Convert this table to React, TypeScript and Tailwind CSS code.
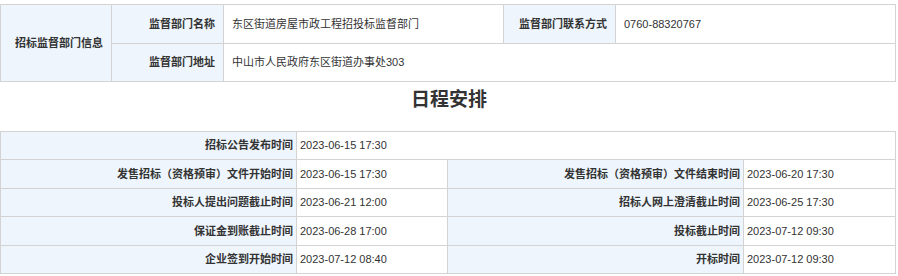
const schedule: [string, string, string?, string?][] = [
  ["招标公告发布时间", "2023-06-15 17:30"],
  ["发售招标（资格预审）文件开始时间", "2023-06-15 17:30", "发售招标（资格预审）文件结束时间", "2023-06-20 17:30"],
  ["投标人提出问题截止时间", "2023-06-21 12:00", "招标人网上澄清截止时间", "2023-06-25 17:30"],
  ["保证金到账截止时间", "2023-06-28 17:00", "投标截止时间", "2023-07-12 09:30"],
  ["企业签到开始时间", "2023-07-12 08:40", "开标时间", "2023-07-12 09:30"],
];

const label = "border border-[#d3d3d3] bg-[#eef5fd] text-right font-bold";
const value = "border border-[#d3d3d3] bg-white text-left";

export default function App() {
  return (
    <div className="w-[898px] bg-white pt-[4px] text-[11px] text-[#333] [font-family:'Liberation_Sans','Noto_Sans_CJK_SC',sans-serif]">
      {/* 监督部门信息 */}
      <table className="w-[896px] table-fixed border-collapse">
        <colgroup>
          <col className="w-[111px]" />
          <col className="w-[112px]" />
          <col className="w-[280px]" />
          <col className="w-[112px]" />
          <col />
        </colgroup>
        <tbody>
          <tr className="h-[39px]">
            <td rowSpan={2} className={`${label} pr-2`}>招标监督部门信息</td>
            <td className={`${label} pr-2`}>监督部门名称</td>
            <td className={`${value} pl-2`}>东区街道房屋市政工程招投标监督部门</td>
            <td className={`${label} pr-2`}>监督部门联系方式</td>
            <td className={`${value} pl-2`}>0760-88320767</td>
          </tr>
          <tr className="h-[38px]">
            <td className={`${label} pr-2`}>监督部门地址</td>
            <td colSpan={3} className={`${value} pl-2`}>中山市人民政府东区街道办事处303</td>
          </tr>
        </tbody>
      </table>

      <div className="flex h-[35px] items-center justify-center text-[19px] font-bold leading-none">日程安排</div>

      {/* 日程安排 */}
      <table className="mt-[14px] w-[896px] table-fixed border-collapse">
        <colgroup>
          <col className="w-[296px]" />
          <col className="w-[151px]" />
          <col className="w-[296px]" />
          <col />
        </colgroup>
        <tbody>
          {schedule.map(([l1, v1, l2, v2], i) => (
            <tr key={i} className="h-[28.4px]">
              <td className={`${label} pr-[3px]`}>{l1}</td>
              {l2 ? (
                <>
                  <td className={`${value} pl-[3px]`}>{v1}</td>
                  <td className={`${label} pr-[3px]`}>{l2}</td>
                  <td className={`${value} pl-[3px]`}>{v2}</td>
                </>
              ) : (
                <td colSpan={3} className={`${value} pl-[3px]`}>{v1}</td>
              )}
            </tr>
          ))}
        </tbody>
      </table>
    </div>
  );
}
